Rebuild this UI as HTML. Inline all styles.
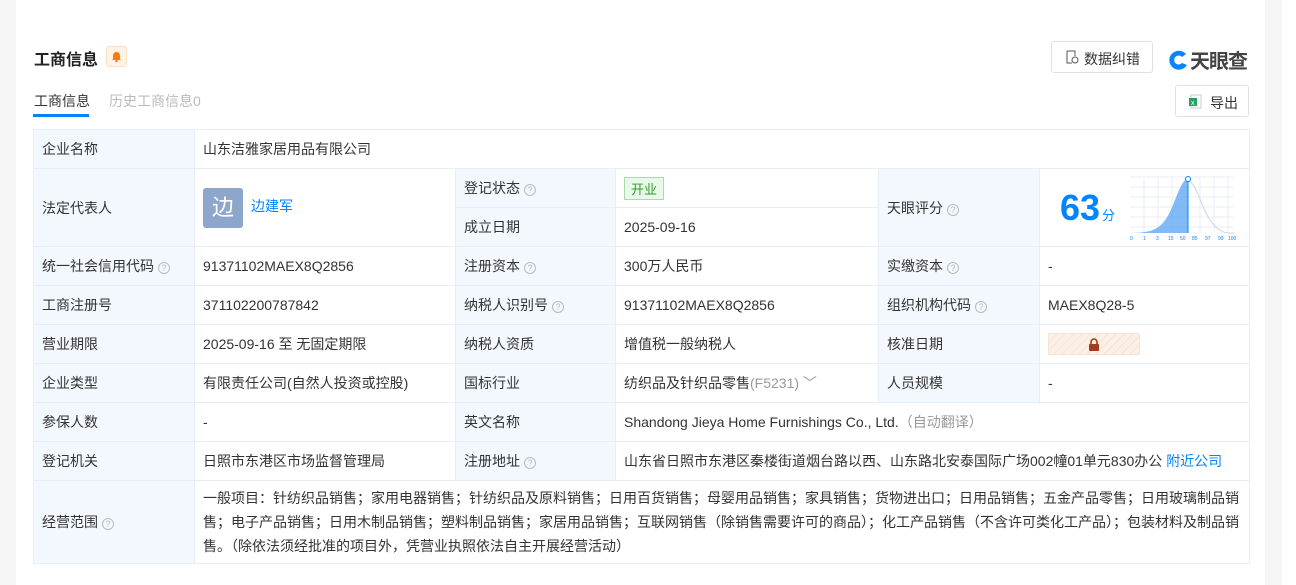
<!DOCTYPE html>
<html><head><meta charset="utf-8"><style>
*{margin:0;padding:0;box-sizing:border-box}
body{width:1296px;height:585px;overflow:hidden;background:#f5f5f5;font-family:"Liberation Sans","Noto Sans CJK SC",sans-serif;font-size:14px;color:#333;position:relative}
.card{position:absolute;left:16px;top:0;width:1249px;height:585px;background:#fff}
.side{position:absolute;left:1282px;top:0;width:14px;height:585px;background:#fff}
.title{position:absolute;left:34px;top:46px;font-size:16px;font-weight:bold;color:#222}
.bell{position:absolute;left:106px;top:46px;width:21px;height:21px;background:#fff3e8;border:1px solid #fde0c4;border-radius:3px}
.tab1{position:absolute;left:34px;top:91px;font-size:14px;color:#333}
.tab1u{position:absolute;left:33px;top:114px;width:56px;height:3px;background:#0084ff}
.tab2{position:absolute;left:109px;top:91px;color:#bbb}
.btn{position:absolute;border:1px solid #dde0e8;border-radius:3px;background:#fff;font-size:14px;color:#333}
table{position:absolute;left:33px;top:129px;border-collapse:collapse;table-layout:fixed}
td{border:1px solid #e6eef7;padding:0 8px;height:39px;vertical-align:middle;white-space:nowrap}
td.l{background:#f2f8fe;color:#333}
.q{display:inline-block;width:12px;height:12px;border:1px solid #bbb;border-radius:50%;font-size:9px;color:#bbb;text-align:center;line-height:10px;margin-left:4px;vertical-align:0px}
.g{color:#999}
.a{color:#0084ff}
</style></head><body>
<div class="card"></div><div class="side"></div>
<div class="title">工商信息</div>
<div class="bell"><svg width="19" height="19" viewBox="0 0 19 19"><path d="M6 12V8.5a3.5 3.5 0 0 1 7 0V12l1 1H5z" fill="#ff7a00"/><circle cx="9.5" cy="14" r="1.2" fill="#ff7a00"/></svg></div>
<div class="tab1">工商信息</div><div class="tab1u"></div>
<div class="tab2">历史工商信息0</div>
<div class="btn" style="left:1051px;top:41px;width:102px;height:32px;padding:7px 0 0 32px">数据纠错<svg style="position:absolute;left:13px;top:8px" width="14" height="14" viewBox="0 0 14 14"><path d="M2 1h8v5M2 1v12h5" fill="none" stroke="#555"/><circle cx="10" cy="10" r="3" fill="none" stroke="#555"/></svg></div>
<div style="position:absolute;left:1168px;top:45px;font-size:20px;font-weight:bold;color:#444;letter-spacing:-1px"><svg width="21" height="21" viewBox="0 0 21 21" style="vertical-align:-3px;margin-right:1px"><path d="M18 4A9.5 9.5 0 1 0 19 15L14 13A4.5 4.5 0 1 1 14 7Z" fill="#0a84ff"/></svg>天眼查</div>
<div class="btn" style="left:1175px;top:85px;width:74px;height:32px;padding:7px 0 0 34px">导出<svg style="position:absolute;left:12px;top:8px" width="14" height="15" viewBox="0 0 14 15"><rect x="3" y="1" width="10" height="13" fill="#fff" stroke="#ccc"/><rect x="1" y="4" width="8" height="8" fill="#21a366"/><text x="3" y="11" font-size="7" fill="#fff" font-family="Liberation Sans">x</text></svg></div>
<table>
<colgroup><col style="width:161px"><col style="width:261px"><col style="width:160px"><col style="width:263px"><col style="width:161px"><col style="width:210px"></colgroup>
<tr><td class="l">企业名称</td><td colspan="5">山东洁雅家居用品有限公司</td></tr>
<tr><td class="l" rowspan="2">法定代表人</td><td rowspan="2"><span style="display:inline-block;width:40px;height:40px;background:#8fa6cc;border-radius:3px;color:#fff;font-size:22px;text-align:center;line-height:40px;vertical-align:middle">边</span><span class="a" style="margin-left:8px">边建军</span></td><td class="l">登记状态<span class="q">?</span></td><td><span style="display:inline-block;background:#eaf8ea;border:1px solid #a9dba9;color:#27a327;padding:1px 6px;font-size:13px">开业</span></td><td class="l" rowspan="2">天眼评分<span class="q">?</span></td><td rowspan="2" style="position:relative"><span style="position:absolute;left:20px;top:18px;font-size:36px;font-weight:bold;color:#0084ff">63</span><span style="position:absolute;left:62px;top:36px;color:#0084ff;font-size:13px">分</span>
<svg style="position:absolute;left:90px;top:6px" width="108" height="66" viewBox="0 0 108 66"><g stroke="#e8eef5" stroke-width="1"><path d="M0 2H104M0 12H104M0 22H104M0 32H104M0 42H104M0 52H104M14 2V58M28 2V58M42 2V58M56 2V58M70 2V58M84 2V58M98 2V58"/></g><path d="M0 58C30 58 35 50 45 25S55 6 58 6V58Z" fill="#63a8f5" opacity=".8"/><path d="M58 6C66 6 70 30 80 45S100 58 104 58" fill="none" stroke="#c8d6e8"/><path d="M58 6V58" stroke="#0a84ff"/><circle cx="58" cy="4" r="2.5" fill="#fff" stroke="#0a84ff"/><text y="65" font-size="5" fill="#0a84ff" font-family="Liberation Sans"><tspan x="0">0</tspan><tspan x="13">1</tspan><tspan x="26">3</tspan><tspan x="38">15</tspan><tspan x="50">50</tspan><tspan x="62">85</tspan><tspan x="75">97</tspan><tspan x="88">99</tspan><tspan x="98">100</tspan></text></svg></td></tr>
<tr><td class="l">成立日期</td><td>2025-09-16</td></tr>
<tr><td class="l">统一社会信用代码<span class="q">?</span></td><td>91371102MAEX8Q2856</td><td class="l">注册资本<span class="q">?</span></td><td>300万人民币</td><td class="l">实缴资本<span class="q">?</span></td><td>-</td></tr>
<tr><td class="l">工商注册号</td><td>371102200787842</td><td class="l">纳税人识别号<span class="q">?</span></td><td>91371102MAEX8Q2856</td><td class="l">组织机构代码<span class="q">?</span></td><td>MAEX8Q28-5</td></tr>
<tr><td class="l">营业期限</td><td>2025-09-16 至 无固定期限</td><td class="l">纳税人资质</td><td>增值税一般纳税人</td><td class="l">核准日期</td><td><span style="display:inline-block;width:92px;height:22px;background:repeating-linear-gradient(135deg,#fbf0e6 0 5px,#f6e3d3 5px 6px);border:1px solid #f5e3d3;border-radius:2px;text-align:center;vertical-align:middle"><svg width="12" height="14" viewBox="0 0 12 14" style="margin-top:4px"><path d="M3 6V4a3 3 0 0 1 6 0v2" fill="none" stroke="#a33d1d" stroke-width="1.6"/><rect x="1" y="6" width="10" height="7" rx="1" fill="#a33d1d"/></svg></span></td></tr>
<tr><td class="l">企业类型</td><td>有限责任公司(自然人投资或控股)</td><td class="l">国标行业</td><td>纺织品及针织品零售<span class="g">(F5231) ﹀</span></td><td class="l">人员规模</td><td>-</td></tr>
<tr><td class="l">参保人数</td><td>-</td><td class="l">英文名称</td><td colspan="3">Shandong Jieya Home Furnishings Co., Ltd.<span class="g">（自动翻译）</span></td></tr>
<tr><td class="l">登记机关</td><td>日照市东港区市场监督管理局</td><td class="l">注册地址<span class="q">?</span></td><td colspan="3">山东省日照市东港区秦楼街道烟台路以西、山东路北安泰国际广场002幢01单元830办公 <span class="a">附近公司</span></td></tr>
<tr><td class="l" style="height:83px">经营范围<span class="q">?</span></td><td colspan="5" style="white-space:normal;line-height:24px;padding:4px 8px">一般项目：针纺织品销售；家用电器销售；针纺织品及原料销售；日用百货销售；母婴用品销售；家具销售；货物进出口；日用品销售；五金产品零售；日用玻璃制品销售；电子产品销售；日用木制品销售；塑料制品销售；家居用品销售；互联网销售（除销售需要许可的商品）；化工产品销售（不含许可类化工产品）；包装材料及制品销售。（除依法须经批准的项目外，凭营业执照依法自主开展经营活动）</td></tr>
</table>
</body></html>
